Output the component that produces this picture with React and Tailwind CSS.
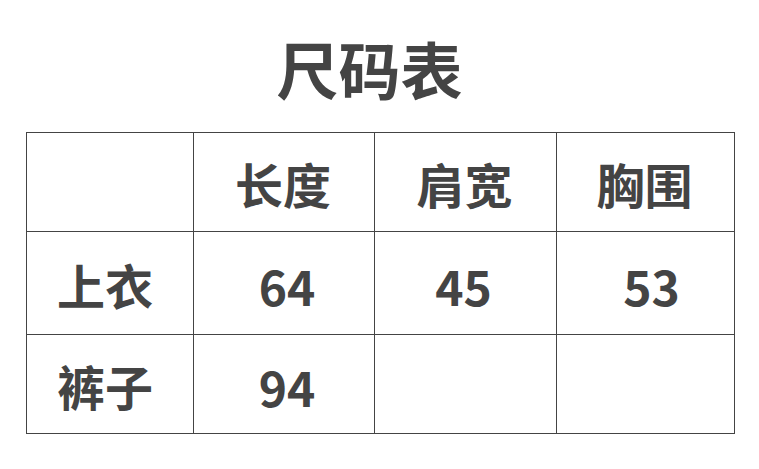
import React from 'react';

const rows = [
    { label: '', values: ['长度', '肩宽', '胸围'], h: 'h-[99px]' },
    { label: '上衣', values: ['64', '45', '53'], h: 'h-[103px]' },
    { label: '裤子', values: ['94', '', ''], h: 'h-[99px]' },
];

// small per-column nudges to match the original
const colPad = ['pl-[6px]', 'pr-[4px]', 'pl-[12px]'];

function App() {
    return (
        <div className="w-[759px] h-[469px] bg-white text-[#444444] font-['Noto_Sans_CJK_SC','Noto_Sans',sans-serif] font-bold overflow-hidden">

            {/* Title */}
            <div className="h-[132px] flex items-center justify-center pt-[4px] pr-[20px]">
                <h1 className="text-[62px] leading-none">尺码表</h1>
            </div>

            {/* Size table */}
            <div className="ml-[26px] w-[709px] border-l border-t border-[#444444] grid grid-cols-[167px_181px_182px_178px]">
                {rows.map((row, i) => (
                    <React.Fragment key={i}>
                        <div className={`${row.h} border-r border-b border-[#444444] flex items-center justify-center pt-[2px] pr-[10px] text-[48px] leading-none`}>
                            {row.label}
                        </div>
                        {row.values.map((v, j) => (
                            <div
                                key={j}
                                className={`${row.h} border-r border-b border-[#444444] flex items-center justify-center ${i === 0 ? 'text-[48px] pt-[2px] pr-[2px]' : `text-[48px] pt-[4px] ${colPad[j]}`} leading-none`}
                            >
                                {v}
                            </div>
                        ))}
                    </React.Fragment>
                ))}
            </div>
        </div>
    );
}

export default App;
